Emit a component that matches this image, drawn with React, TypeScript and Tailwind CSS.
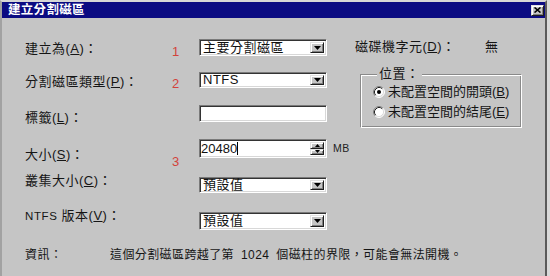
import React from "react";

const FONT = '"Liberation Sans", "Noto Sans CJK TC", "Noto Sans CJK SC", sans-serif';

function Sunken({ className = "", children }: { className?: string; children?: React.ReactNode }) {
  return (
    <div
      className={
        "relative flex items-center bg-white border border-t-[#7a7a7a] border-l-[#7a7a7a] border-b-white border-r-white shadow-[inset_1px_1px_0_#333333,inset_-1px_-1px_0_#d8d8d8] " +
        className
      }
    >
      {children}
    </div>
  );
}

function Raised({ className = "", children }: { className?: string; children?: React.ReactNode }) {
  return (
    <div
      className={
        "flex items-center justify-center bg-[#c5c5c5] border border-t-[#e2e2e2] border-l-[#e2e2e2] border-b-[#1e1e1e] border-r-[#1e1e1e] shadow-[inset_1px_1px_0_#ffffff,inset_-1px_-1px_0_#808080] " +
        className
      }
    >
      {children}
    </div>
  );
}

function DownArrow() {
  return (
    <svg width="7" height="4" viewBox="0 0 7 4">
      <path d="M0 0 H7 L3.5 4 Z" fill="#000" />
    </svg>
  );
}

function Dropdown({ text, h }: { text: string; h: string }) {
  return (
    <Sunken className={"w-[128px] " + h}>
      <span className="pl-[3px] text-[13px] leading-[14px] text-[#111] tracking-[0.5px]">{text}</span>
      <Raised className="absolute right-[2px] top-[2px] bottom-[2px] w-[14px]">
        <DownArrow />
      </Raised>
    </Sunken>
  );
}

function Radio({ checked }: { checked?: boolean }) {
  return (
    <svg width="12" height="12" viewBox="0 0 12 12" className="shrink-0">
      <circle cx="6" cy="6" r="5" fill="#fff" />
      <path d="M2.11 9.89 A5.5 5.5 0 0 1 9.89 2.11" stroke="#808080" strokeWidth="1" fill="none" />
      <path d="M9.89 2.11 A5.5 5.5 0 0 1 2.11 9.89" stroke="#ffffff" strokeWidth="1" fill="none" />
      <path d="M2.82 9.18 A4.5 4.5 0 0 1 9.18 2.82" stroke="#222" strokeWidth="1" fill="none" />
      <path d="M9.18 2.82 A4.5 4.5 0 0 1 2.82 9.18" stroke="#dcdcdc" strokeWidth="1" fill="none" />
      {checked && <circle cx="6" cy="6" r="2" fill="#000" />}
    </svg>
  );
}

function Label({ children, className = "" }: { children: React.ReactNode; className?: string }) {
  return (
    <div className={"shrink-0 text-[13px] leading-[14px] text-[#151515] tracking-[0.5px] whitespace-nowrap " + className}>
      {children}
    </div>
  );
}

function Num({ n, className = "" }: { n: string; className?: string }) {
  return <div className={"shrink-0 w-[27px] text-[13px] leading-[14px] font-medium text-[#d3423b] " + className}>{n}</div>;
}

export default function App() {
  return (
    <div className="w-[550px] h-[276px] overflow-hidden bg-[#d9d9d9]" style={{ fontFamily: FONT }}>
      <div className="w-[547px] h-[300px] bg-[#c5c5c5] border-t-2 border-l-2 border-r-2 border-t-[#d6d6d6] border-l-[#a2a2a2] border-r-[#5a5a5a] flex flex-col">
        {/* title bar */}
        <div className="h-[16px] bg-[#0b0b82] flex items-center justify-between pl-[6px] pr-[1px]">
          <span className="text-white text-[12.5px] leading-[14px] font-bold tracking-[0.3px]">建立分割磁區</span>
          <Raised className="w-[13px] h-[11px]">
            <svg width="7" height="6" viewBox="0 0 7 6">
              <path d="M0.5 0.5 L6.5 5.5 M6.5 0.5 L0.5 5.5" stroke="#000" strokeWidth="1.6" />
            </svg>
          </Raised>
        </div>

        {/* body */}
        <div className="flex pl-[23px]">
          {/* left column */}
          <div className="w-[330px] shrink-0 pt-[21px] flex flex-col">
            <div className="h-[33px] flex items-start">
              <Label className="w-[147px] mt-[3px]">建立為(<u>A</u>)：</Label>
              <Num n="1" className="mt-[6px]" />
              <Dropdown text="主要分割磁區" h="h-[17px]" />
            </div>
            <div className="h-[33px] flex items-start">
              <Label className="w-[147px] mt-[3px]">分割磁區類型(<u>P</u>)：</Label>
              <Num n="2" className="mt-[5px]" />
              <Dropdown text="NTFS" h="h-[16px]" />
            </div>
            <div className="h-[34px] flex items-start">
              <Label className="w-[147px] mt-[6px]">標籤(<u>L</u>)：</Label>
              <Num n="" />
              <Sunken className="w-[128px] h-[17px]" />
            </div>
            <div className="h-[35px] flex items-start">
              <Label className="w-[147px] mt-[9px]">大小(<u>S</u>)：</Label>
              <Num n="3" className="mt-[16px]" />
              <Sunken className="w-[128px] h-[19px]">
                <span className="pl-[1px] text-[13px] leading-[14px] text-[#111]">20480</span>
                <span className="w-[1px] h-[13px] bg-black" />
                <div className="absolute right-[2px] top-[2px] bottom-[2px] w-[14px] flex flex-col">
                  <Raised className="flex-1">
                    <svg width="5" height="3" viewBox="0 0 5 3">
                      <path d="M0 3 H5 L2.5 0 Z" fill="#000" />
                    </svg>
                  </Raised>
                  <Raised className="flex-1">
                    <svg width="5" height="3" viewBox="0 0 5 3">
                      <path d="M0 0 H5 L2.5 3 Z" fill="#000" />
                    </svg>
                  </Raised>
                </div>
              </Sunken>
              <span className="ml-[6px] mt-[3px] text-[10.5px] leading-[12px] text-[#222] tracking-[0.5px]">MB</span>
            </div>
            <div className="h-[35px] flex items-start">
              <Label className="w-[147px]">叢集大小(<u>C</u>)：</Label>
              <Num n="" />
              <div className="mt-[3px]">
                <Dropdown text="預設值" h="h-[16px]" />
              </div>
            </div>
            <div className="h-[39px] flex items-start">
              <Label className="w-[147px]">
                <span className="text-[11.5px] tracking-[0.6px]">NTFS</span> 版本(<u>V</u>)：
              </Label>
              <Num n="" />
              <div className="mt-[3px]">
                <Dropdown text="預設值" h="h-[18px]" />
              </div>
            </div>
            <div className="flex items-start text-[12px] leading-[14px] text-[#151515] whitespace-nowrap">
              <span className="w-[85px] shrink-0 tracking-[0.5px]">資訊：</span>
              <span className="shrink-0 tracking-[0.4px]">
                這個分割磁區跨越了第<span className="mx-[7px]">1024</span>個磁柱的界限，可能會無法開機。
              </span>
            </div>
          </div>

          {/* right column */}
          <div className="pt-[22px] flex flex-col">
            <div className="flex items-start">
              <Label className="w-[130px]">磁碟機字元(<u>D</u>)：</Label>
              <Label>無</Label>
            </div>
            <div className="relative ml-[5px] mt-[20px] w-[162px] h-[54px] border border-t-[#8a8a8a] border-l-[#8a8a8a] border-b-white border-r-white shadow-[inset_1px_1px_0_#ffffff,inset_-1px_-1px_0_#8a8a8a]">
              <span className="absolute left-[16px] -top-[8px] px-[2px] bg-[#c5c5c5] text-[13px] leading-[14px] text-[#151515] tracking-[0.5px]">
                位置：
              </span>
              <div className="flex flex-col gap-[6px] pt-[10px] pl-[12px]">
                <div className="flex items-center gap-[3px]">
                  <Radio checked />
                  <Label className="tracking-[0px]">未配置空間的開頭(<u>B</u>)</Label>
                </div>
                <div className="flex items-center gap-[3px]">
                  <Radio />
                  <Label className="tracking-[0px]">未配置空間的結尾(<u>E</u>)</Label>
                </div>
              </div>
            </div>
          </div>
        </div>
      </div>
    </div>
  );
}
